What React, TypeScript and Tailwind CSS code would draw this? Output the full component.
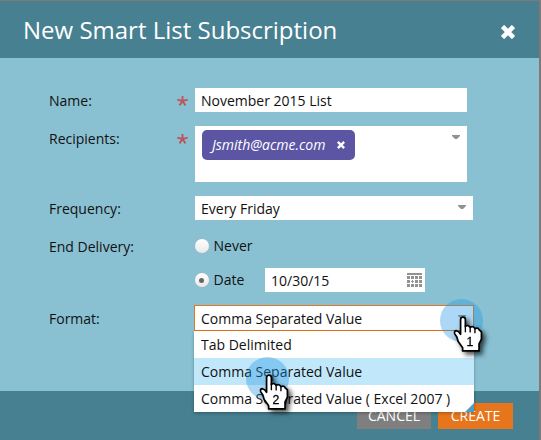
import React from "react";

function Row({ label, required, className = "", children }: { label: string; required?: boolean; className?: string; children: React.ReactNode }) {
  return (
    <div className={"flex items-start pl-[49px] " + className}>
      <div className="flex h-6 w-[146px] shrink-0 items-center justify-between pr-[7px]">
        <span className="relative top-px">{label}</span>
        {required && <Asterisk />}
      </div>
      {children}
    </div>
  );
}

function Asterisk() {
  return (
    <svg width="11" height="10" viewBox="0 0 11 10" className="mt-px shrink-0" stroke="#bd565c" strokeWidth="1.9" fill="none">
      <path d="M5.5 5V0M5.5 5L.3 3.6M5.5 5L10.7 3.6M5.5 5L2.5 9.4M5.5 5L8.5 9.4" />
    </svg>
  );
}

function Caret({ className = "" }: { className?: string }) {
  return (
    <svg width="8" height="4" viewBox="0 0 8 4" className={className} fill="#929292">
      <path d="M0 0H8V1L5 4H3L0 1Z" />
    </svg>
  );
}

function Cross({ size, width }: { size: number; width: number }) {
  return (
    <svg width={size} height={size} viewBox="0 0 14 14" stroke="#fff" strokeWidth={width}>
      <path d="M1.5 1.5L12.5 12.5M12.5 1.5L1.5 12.5" />
    </svg>
  );
}

function Calendar() {
  return (
    <svg width="15" height="14" viewBox="0 0 15 14" className="-mt-px" fill="#929292" shapeRendering="crispEdges">
      <path d="M0 0H15V2H0ZM0 3H3V6H0ZM4 3H7V6H4ZM8 3H11V6H8ZM12 3H15V6H12ZM0 7H3V10H0ZM5 7H6V8H7V9H6V10H5V9H4V8H5ZM8 7H11V10H8ZM12 7H15V10H12ZM0 11H3V14H0ZM4 11H7V14H4ZM8 11H11V14H8ZM12 11H15V14H12Z" />
    </svg>
  );
}

function Radio({ checked }: { checked?: boolean }) {
  return (
    <span className="-ml-[0.5px] flex size-[14px] items-center justify-center rounded-full bg-linear-to-b from-white to-[#e9e9e9] shadow-[0_0_1px_0.5px_#a5b5bb]">
      {checked && <span className="size-[5px] rounded-full bg-[#666]" />}
    </span>
  );
}

function Pointer({ n, className }: { n: number; className: string }) {
  return (
    <svg width="41" height="48" viewBox="60 70 120 138" preserveAspectRatio="none" className={"absolute z-20 overflow-visible drop-shadow-[3px_3px_2.5px_rgba(0,0,0,0.7)] " + className}>
      <path
        d="M91 131V88Q92 82 98 82Q105 82 105 89V109Q113 102 119 111Q128 106 133 115Q142 111 146 119L152 124V145L145 159V179H97V170L84 152L80 139L74 130Q71 121 79 121Q86 122 91 131Z"
        fill="#fff" stroke="#000" strokeWidth="5" strokeLinejoin="round"
      />
      <path d="M105 105V125M119 110V126M133 114V128" stroke="#000" strokeWidth="4" />
      <text x="118" y="165" textAnchor="middle" fontSize="36" fill="#000" stroke="#000" strokeWidth="0.8" className="font-['Liberation_Sans',sans-serif]">{n}</text>
    </svg>
  );
}

export default function App() {
  return (
    <div className="relative flex h-[440px] w-[541px] flex-col overflow-hidden border-t border-r-2 border-[#7d7979] bg-[#89c1d3] font-['Open_Sans',sans-serif] text-[14px] leading-6 text-[#111]">
      <header className="flex h-[57px] shrink-0 items-center justify-between bg-[#468091] pr-[24px] pl-[23px]">
        <h1 className="pt-px text-[24px] text-white">New Smart List Subscription</h1>
        <div className="pt-[5px]"><Cross size={14} width={4.6} /></div>
      </header>

      <main className="h-[333px] shrink-0 pt-[30px]">
        <Row label="Name:" required>
          <div className="h-6 w-[272px] bg-white pl-[6px]"><span className="relative top-px">November 2015 List</span></div>
        </Row>
        <Row label="Recipients:" required className="mt-[14px]">
          <div className="flex h-14 w-[272px] items-start justify-between bg-white pt-1 pr-[7px] pl-[7px]">
            <div className="flex h-[30px] w-[153px] items-center justify-between rounded-[5px] bg-[#5b55a4] pr-[10px] pl-[10px] text-white">
              <span className="font-medium italic">Jsmith@acme.com</span>
              <Cross size={8} width={4.2} />
            </div>
            <Caret className="mt-[5px]" />
          </div>
        </Row>
        <Row label="Frequency:" className="mt-[14px]">
          <div className="flex h-6 w-[278px] items-center justify-between bg-white pr-[7px] pl-[6px]">
            <span className="relative top-px">Every Friday</span>
            <Caret className="-mt-[2px]" />
          </div>
        </Row>
        <Row label="End Delivery:" className="mt-[14px]">
          <div className="flex h-6 items-center gap-[5px]">
            <Radio /><span>Never</span>
          </div>
        </Row>
        <div className="mt-[10px] flex h-6 items-center pl-[195px]">
          <Radio checked />
          <span className="ml-[5px] w-[51.5px]">Date</span>
          <div className="flex h-6 w-[160px] items-center justify-between bg-white pr-[3px] pl-[6px]">
            <span className="relative top-px">10/30/15</span>
            <Calendar />
          </div>
        </div>
        <Row label="Format:" className="mt-[14px]">
          <div className="relative -mt-px -ml-px">
            <div className="flex h-[26px] w-[280px] items-center justify-between border border-[#e7751b] bg-white pr-[7px] pl-[6px]">
              <span className="relative top-px">Comma Separated Value</span>
              <Caret className="-mt-[2px]" />
            </div>
            <ul className="absolute top-[26px] left-0 z-10 w-[280px] bg-white leading-[27px] shadow-[0_1px_3px_rgba(0,0,0,0.3)]">
              <li className="h-[27px] pl-[7px]">Tab Delimited</li>
              <li className="h-[27px] bg-[#c1e8fa] pl-[7px]">Comma Separated Value</li>
              <li className="h-[27px] pl-[7px]">Comma Separated Value ( Excel 2007 )</li>
              <li className="absolute right-0 bottom-0 size-[9px] bg-[#4a9fc8] [clip-path:polygon(100%_0,100%_100%,0_100%)]" />
            </ul>
          </div>
        </Row>
      </main>

      <footer className="flex flex-1 items-start justify-end gap-[7px] bg-[#468091] pt-3 pr-[26px] leading-[26px] text-white">
        <button className="h-[26px] w-[74px] bg-[#7f7f7f]">CANCEL</button>
        <button className="h-[26px] w-[75px] bg-[#e7751b]">CREATE</button>
      </footer>

      <div className="absolute top-[298px] left-[440px] z-10 size-[43px] rounded-full bg-[#1f96e4]/37 blur-[0.5px]" />
      <div className="absolute top-[356px] left-[246px] z-10 size-[43px] rounded-full bg-[#1f96e4]/37 blur-[0.5px]" />
      <Pointer n={1} className="top-[312px] left-[450px]" />
      <Pointer n={2} className="top-[370px] left-[256px]" />
    </div>
  );
}
